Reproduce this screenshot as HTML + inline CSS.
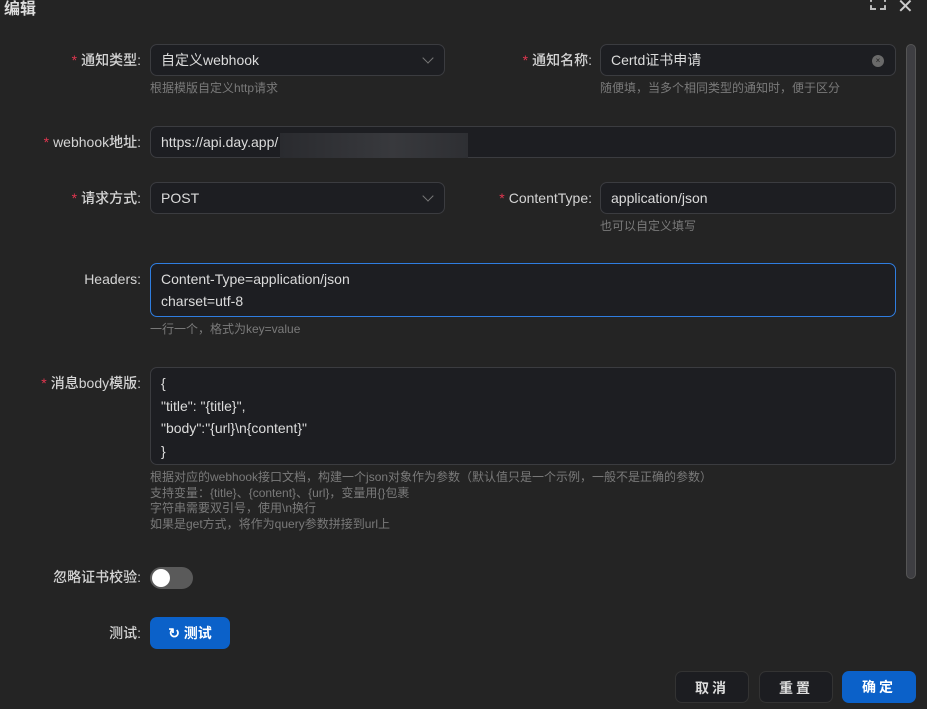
<!DOCTYPE html>
<html><head><meta charset="utf-8"><style>
*{box-sizing:border-box;margin:0;padding:0}
body{width:927px;height:709px;overflow:hidden;background:#242424;font-family:"Liberation Sans","Noto Sans CJK SC",sans-serif;color:#d8d8d8;position:relative;font-size:14px}
.a{position:absolute}
.lbl{position:absolute;text-align:right;font-size:14px;color:#d4d4d4;line-height:20px;font-weight:500}
.st{color:#e0364f;margin-right:4px}
.in{position:absolute;background:#1d1e22;border:1px solid #3b3c40;border-radius:7px;font-size:14px;color:#dcdcdc;padding-left:10px;line-height:30px}
.help{position:absolute;font-size:12px;color:#7a7a7a;line-height:15.5px}
.chev{position:absolute;right:12px;top:9px;width:8px;height:8px;border-right:1px solid #777;border-bottom:1px solid #777;transform:rotate(45deg)}
.btn{position:absolute;height:32px;border-radius:7px;font-size:14px;text-align:center;line-height:32px;letter-spacing:3px;font-weight:bold}
</style></head><body>
<div class="a" style="left:4px;top:-5px;font-size:16px;font-weight:bold;color:#ddd">编辑</div>
<div class="a" style="left:870px;top:-3px;width:16px;height:13px;border:2px dashed #bbb;border-top:none"></div>
<div class="a" style="left:897px;top:-6px;font-size:20px;color:#ccc">✕</div>

<div class="lbl" style="right:786px;top:50px"><span class="st">*</span>通知类型:</div>
<div class="in" style="left:150px;top:44px;width:295px;height:32px">自定义webhook<div class="chev"></div></div>
<div class="help" style="left:150px;top:81px">根据模版自定义http请求</div>

<div class="lbl" style="right:335px;top:50px"><span class="st">*</span>通知名称:</div>
<div class="in" style="left:600px;top:44px;width:296px;height:32px">Certd证书申请<div class="a" style="right:11px;top:10px;width:12px;height:12px;border-radius:50%;background:#6a6a6a;color:#222;font-size:8px;line-height:12px;text-align:center;padding:0">×</div></div>
<div class="help" style="left:600px;top:81px">随便填，当多个相同类型的通知时，便于区分</div>

<div class="lbl" style="right:786px;top:132px"><span class="st">*</span>webhook地址:</div>
<div class="in" style="left:150px;top:126px;width:746px;height:32px">https://api.day.app/</div>
<div class="a" style="left:280px;top:133px;width:188px;height:25px;background:linear-gradient(90deg,#2a2b2f,#38393d 60%,#2e2f33)"></div>

<div class="lbl" style="right:786px;top:188px"><span class="st">*</span>请求方式:</div>
<div class="in" style="left:150px;top:182px;width:295px;height:32px">POST<div class="chev"></div></div>
<div class="lbl" style="right:335px;top:188px"><span class="st">*</span>ContentType:</div>
<div class="in" style="left:600px;top:182px;width:296px;height:32px">application/json</div>
<div class="help" style="left:600px;top:219px">也可以自定义填写</div>

<div class="lbl" style="right:786px;top:269px">Headers:</div>
<div class="in" style="left:150px;top:263px;width:746px;height:54px;border-color:#2f7de0;line-height:22px;padding-top:4px">Content-Type=application/json<br>charset=utf-8</div>
<div class="help" style="left:150px;top:322px">一行一个，格式为key=value</div>

<div class="lbl" style="right:786px;top:373px"><span class="st">*</span>消息body模版:</div>
<div class="in" style="left:150px;top:367px;width:746px;height:98px;line-height:22.5px;padding-top:4px">{<br>"title": "{title}",<br>"body":"{url}\n{content}"<br>}</div>
<div class="help" style="left:150px;top:470px">根据对应的webhook接口文档，构建一个json对象作为参数（默认值只是一个示例，一般不是正确的参数）<br>支持变量：{title}、{content}、{url}，变量用{}包裹<br>字符串需要双引号，使用\n换行<br>如果是get方式，将作为query参数拼接到url上</div>

<div class="lbl" style="right:786px;top:567px">忽略证书校验:</div>
<div class="a" style="left:150px;top:567px;width:43px;height:22px;border-radius:11px;background:#5a5a5a"><div class="a" style="left:2px;top:2px;width:18px;height:18px;border-radius:50%;background:#fff"></div></div>

<div class="lbl" style="right:786px;top:623px">测试:</div>
<div class="btn" style="left:150px;top:617px;width:80px;background:#0b61c9;color:#fff;letter-spacing:0">↻ 测试</div>

<div class="a" style="left:906px;top:44px;width:10px;height:535px;border-radius:5px;background:#3e3e42;border:1px solid #555"></div>

<div class="btn" style="left:675px;top:671px;width:74px;background:#1c1d21;border:1px solid #333;color:#ddd">取消</div>
<div class="btn" style="left:759px;top:671px;width:74px;background:#1c1d21;border:1px solid #333;color:#ddd">重置</div>
<div class="btn" style="left:842px;top:671px;width:74px;background:#0b61c9;color:#fff">确定</div>
</body></html>
